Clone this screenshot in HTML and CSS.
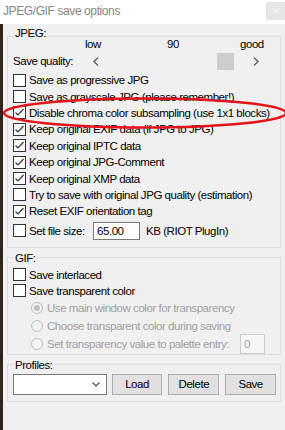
FILE: index.html
```html
<!DOCTYPE html>
<html lang="en">
<head>
    <meta charset="UTF-8">
    <title>JPEG/GIF save options</title>
    <link rel="stylesheet" href="styles.css">
</head>
<body>
    <div class="window">
        <!-- Title bar -->
        <div class="titlebar">
            <span class="title">JPEG/GIF save options</span>
            <span class="close">&#10005;</span>
        </div>

        <div class="frame">
            <!-- JPEG options -->
            <fieldset class="group jpeg">
                <legend>JPEG:</legend>
                <div class="scale"><span></span><span>low</span><span>90</span><span>good</span></div>
                <div class="quality">
                    <span class="quality-label">Save quality:</span>
                    <div class="scrollbar">
                        <span class="arrow"><svg width="6" height="9" viewBox="0 0 6 9"><polyline points="5,0.5 1,4.5 5,8.5" fill="none" stroke="#606060" stroke-width="1.4"/></svg></span>
                        <div class="track"><span class="thumb"></span></div>
                        <span class="arrow"><svg width="6" height="9" viewBox="0 0 6 9"><polyline points="1,0.5 5,4.5 1,8.5" fill="none" stroke="#606060" stroke-width="1.4"/></svg></span>
                    </div>
                </div>
                <div class="checks">
                    <label class="check"><span class="box"></span>Save as progressive JPG</label>
                    <label class="check"><span class="box"></span>Save as grayscale JPG (please remember!)</label>
                    <label class="check"><span class="box"><svg width="11" height="11" viewBox="0 0 11 11"><polyline points="1.5,5.5 4,8 9.5,2" fill="none" stroke="#333" stroke-width="1.2"/></svg></span>Disable chroma color subsampling (use 1x1 blocks)</label>
                    <label class="check"><span class="box"><svg width="11" height="11" viewBox="0 0 11 11"><polyline points="1.5,5.5 4,8 9.5,2" fill="none" stroke="#333" stroke-width="1.2"/></svg></span>Keep original EXIF data (if JPG to JPG)</label>
                    <label class="check"><span class="box"><svg width="11" height="11" viewBox="0 0 11 11"><polyline points="1.5,5.5 4,8 9.5,2" fill="none" stroke="#333" stroke-width="1.2"/></svg></span>Keep original IPTC data</label>
                    <label class="check"><span class="box"><svg width="11" height="11" viewBox="0 0 11 11"><polyline points="1.5,5.5 4,8 9.5,2" fill="none" stroke="#333" stroke-width="1.2"/></svg></span>Keep original JPG-Comment</label>
                    <label class="check"><span class="box"><svg width="11" height="11" viewBox="0 0 11 11"><polyline points="1.5,5.5 4,8 9.5,2" fill="none" stroke="#333" stroke-width="1.2"/></svg></span>Keep original XMP data</label>
                    <label class="check"><span class="box"></span>Try to save with original JPG quality (estimation)</label>
                    <label class="check"><span class="box"><svg width="11" height="11" viewBox="0 0 11 11"><polyline points="1.5,5.5 4,8 9.5,2" fill="none" stroke="#333" stroke-width="1.2"/></svg></span>Reset EXIF orientation tag</label>
                </div>
                <div class="sizerow">
                    <span class="box"></span>
                    <span class="size-label">Set file size:</span>
                    <input class="field" type="text" value="65.00">
                    <span class="unit">KB (RIOT PlugIn)</span>
                </div>
            </fieldset>

            <!-- GIF options -->
            <fieldset class="group gif">
                <legend>GIF:</legend>
                <label class="check first"><span class="box"></span>Save interlaced</label>
                <label class="check"><span class="box"></span>Save transparent color</label>
                <div class="option"><span class="radio checked"></span>Use main window color for transparency</div>
                <div class="option"><span class="radio"></span>Choose transparent color during saving</div>
                <div class="option"><span class="radio"></span>Set transparency value to palette entry:<input class="field small" type="text" value="0" disabled></div>
            </fieldset>

            <!-- Profiles -->
            <fieldset class="group profiles">
                <legend>Profiles:</legend>
                <div class="profile-row">
                    <div class="combo"><svg width="8" height="5" viewBox="0 0 8 5"><polyline points="0.5,0.5 4,4 7.5,0.5" fill="none" stroke="#444" stroke-width="1.1"/></svg></div>
                    <button>Load</button>
                    <button>Delete</button>
                    <button>Save</button>
                </div>
            </fieldset>
        </div>

        <!-- Red annotation around the highlighted option -->
        <svg class="mark" width="285" height="430" viewBox="0 0 285 430">
            <ellipse cx="145" cy="113" rx="141" ry="14.5" fill="none" stroke="#e3131b" stroke-width="2.5"/>
        </svg>
    </div>
</body>
</html>
```

FILE: styles.css
```css
* {
    box-sizing: border-box;
}
body {
    margin: 0;
    background: #f0f0f0;
    font-family: "Liberation Sans", Arial, sans-serif;
    font-size: 11.5px;
    letter-spacing: -0.45px;
    color: #000;
}
/* window */
.window {
    position: relative;
    width: 285px;
    height: 430px;
    overflow: hidden;
}
.titlebar {
    height: 24px;
    background: #fff;
    display: flex;
    justify-content: space-between;
    align-items: flex-start;
}
.title {
    padding: 4px 0 0 3px;
    font-size: 12px;
    letter-spacing: -0.4px;
    line-height: 14px;
    color: #858585;
}
.close {
    width: 19px;
    height: 18px;
    margin-top: 2px;
    background: #e6e6e6;
    color: #f6f6f6;
    font-size: 9px;
    display: flex;
    align-items: center;
    justify-content: center;
}
.frame {
    height: 406px;
    border-left: 3px solid #33241b;
    padding: 2px 4px 0 4px;
}
/* group boxes */
.group {
    margin: 0;
    padding: 0 4px 0 5px;
    border: 1px solid #dcdcdc;
    min-width: 0;
}
.group legend {
    padding: 0 1px;
    margin-left: 1px;
    line-height: 14px;
}
.jpeg {
    padding-bottom: 7px;
}
.jpeg legend {
    padding-bottom: 6px;
}
.gif {
    margin-top: 3px;
    padding-bottom: 1px;
}
.profiles {
    margin-top: 3px;
    padding-bottom: 6px;
}
/* quality slider */
.scale {
    display: grid;
    grid-template-columns: 72px 82px 73px auto;
    height: 14px;
    line-height: 14px;
    margin-top: -9px;
}
.quality {
    display: flex;
    align-items: center;
    height: 18px;
    margin-top: 1px;
}
.quality-label {
    width: 74px;
}
.scrollbar {
    width: 177px;
    height: 18px;
    display: flex;
}
.arrow {
    width: 17px;
    display: flex;
    align-items: center;
    justify-content: center;
}
.track {
    flex: 1;
    display: flex;
    align-items: flex-end;
}
.thumb {
    width: 17px;
    height: 17px;
    margin-left: 113px;
    background: #cdcdcd;
}
/* checkboxes */
.checks {
    margin-top: 2px;
}
.check {
    display: flex;
    align-items: center;
    height: 16.4px;
    white-space: nowrap;
}
.gif .check {
    height: 16px;
}
.gif .check.first {
    margin-top: 2px;
}
.box {
    width: 13px;
    height: 13px;
    margin-right: 3px;
    border: 1px solid #333;
    background: #fff;
    flex: none;
    display: flex;
    align-items: center;
    justify-content: center;
}
.sizerow {
    display: flex;
    align-items: center;
    height: 18px;
    margin-top: 2.4px;
}
.size-label {
    width: 64px;
}
.field {
    width: 47px;
    height: 18px;
    padding: 0 3px;
    border: 1px solid #7a7a7a;
    background: #fff;
    font: inherit;
    letter-spacing: inherit;
    color: #000;
}
.unit {
    margin-left: 6px;
}
/* radio options (disabled) */
.option {
    display: flex;
    align-items: center;
    height: 18px;
    padding-left: 18px;
    color: #a0a0a0;
    white-space: nowrap;
}
.radio {
    width: 12px;
    height: 12px;
    margin-right: 4px;
    border: 1px solid #bcbcbc;
    border-radius: 50%;
    background: #f4f4f4;
    flex: none;
    display: flex;
    align-items: center;
    justify-content: center;
}
.radio.checked::after {
    content: "";
    width: 6px;
    height: 6px;
    border-radius: 50%;
    background: #c0c0c0;
}
.field.small {
    width: 25px;
    height: 20px;
    margin: -1px 11px -1px auto;
    border-color: #cccccc;
    background: #f7f7f7;
    color: #a0a0a0;
}
/* profiles */
.profile-row {
    display: flex;
    align-items: center;
    gap: 6px;
    height: 21px;
    margin-top: 2px;
}
.combo {
    width: 94px;
    height: 21px;
    margin-right: -1px;
    border: 1px solid #7a7a7a;
    background: #fff;
    display: flex;
    align-items: center;
    justify-content: flex-end;
    padding-right: 6px;
}
button {
    width: 51px;
    height: 21px;
    padding: 0;
    border: 1px solid #adadad;
    background: #e1e1e1;
    font: inherit;
    letter-spacing: inherit;
    color: #000;
}
/* annotation */
.mark {
    position: absolute;
    left: 0;
    top: 0;
    pointer-events: none;
}
```
